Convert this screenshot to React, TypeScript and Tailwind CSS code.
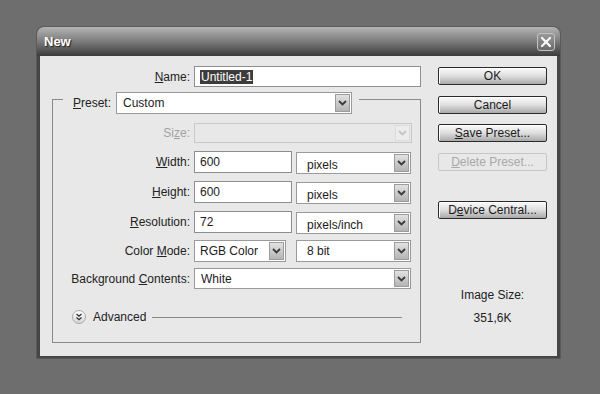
import React from "react";

function U({ children }: { children: React.ReactNode }) {
    return <span className="underline underline-offset-[1px]">{children}</span>;
}

function Chevron({ disabled = false }: { disabled?: boolean }) {
    return (
        <svg width="9" height="6" viewBox="0 0 9 6">
            <path
                d="M1 1l3.5 3.5L8 1"
                stroke={disabled ? "#c4c4c4" : "#3a3a3a"}
                strokeWidth="1.8"
                fill="none"
            />
        </svg>
    );
}

interface SelectProps {
    value?: string;
    width: string;
    height?: string;
    disabled?: boolean;
    textPad?: string;
}

function Select({ value = "", width, height = "h-[22px]", disabled = false, textPad = "pl-[9px]" }: SelectProps) {
    return (
        <div
            className={`${width} ${height} flex items-stretch border border-[#9a9a9a] p-[1px] ${
                disabled ? "bg-[#e8e8e8] border-[#c8c8c8]" : "bg-white"
            }`}
        >
            <div className={`flex-1 flex items-center ${textPad} text-[12px] text-[#1c1c1c]`}>{value}</div>
            <div
                className={`w-[15px] flex items-center justify-center border ${
                    disabled
                        ? "border-[#dcdcdc] bg-[#ececec]"
                        : "border-[#9c9c9c] bg-gradient-to-b from-[#e2e2e2] to-[#b4b4b4]"
                }`}
            >
                <Chevron disabled={disabled} />
            </div>
        </div>
    );
}

function TextInput({ value, width }: { value: string; width: string }) {
    return (
        <div
            className={`${width} h-[22px] flex items-center border border-[#8e8e8e] bg-white pl-[5px] text-[12px] text-[#1c1c1c]`}
        >
            {value}
        </div>
    );
}

function Label({ children, width, muted = false }: { children: React.ReactNode; width: string; muted?: boolean }) {
    return (
        <div className={`${width} text-right text-[12px] ${muted ? "text-[#a2a2a2]" : "text-[#222]"}`}>
            {children}
        </div>
    );
}

function Button({ children, disabled = false, className = "" }: { children: React.ReactNode; disabled?: boolean; className?: string }) {
    return (
        <div
            className={`w-[109px] h-[18px] flex items-center justify-center rounded-[2px] text-[12px] ${
                disabled
                    ? "border border-[#c6c6c6] text-[#a8a8a8]"
                    : "border border-[#2a2a2a] bg-gradient-to-b from-[#fbfbfb] via-[#dedede] to-[#a9a9a9] text-[#1c1c1c] shadow-[inset_1px_1px_0_#ffffff]"
            } ${className}`}
        >
            {children}
        </div>
    );
}

export default function App() {
    return (
        <div
            className="w-[600px] h-[394px] bg-[#6e6e6e] pl-[37px] pt-[27px]"
            style={{ fontFamily: "Tahoma, 'Liberation Sans', Arial, sans-serif" }}
        >
            <div className="w-[523px] h-[331px] flex flex-col rounded-t-[7px] bg-[#464646] shadow-[0_0_0_1px_#5a5a5a]">
                {/* Title bar */}
                <div className="h-[29px] flex items-center justify-between rounded-t-[7px] bg-gradient-to-b from-[#b4b4b4] via-[#7c7c7c] to-[#3c3c3c] pl-[7px] pr-[5px]">
                    <span className="text-[13px] font-bold text-white [text-shadow:1px_1px_1px_#222]">New</span>
                    <div className="w-[18px] h-[18px] flex items-center justify-center rounded-[3px] border border-[#c2c2c2] bg-gradient-to-b from-[#9a9a9a] to-[#6a6a6a]">
                        <svg width="12" height="12" viewBox="0 0 12 12">
                            <path d="M2 2l8 8M10 2l-8 8" stroke="#fff" strokeWidth="2.2" strokeLinecap="round" />
                        </svg>
                    </div>
                </div>

                {/* Body */}
                <div className="flex-1 mx-[3px] mb-[2px] flex bg-[#e8e8e8]">
                    {/* Form */}
                    <div className="w-[390px] flex flex-col pt-[10px]">
                        <div className="flex items-center">
                            <Label width="w-[150px]">
                                <U>N</U>ame:
                            </Label>
                            <div className="ml-[4px] w-[227px] h-[21px] flex items-center border border-[#8e8e8e] bg-white pl-[5px]">
                                <span className="bg-[#3c3c3c] px-[1px] text-[12px] leading-[14px] text-white">Untitled-1</span>
                            </div>
                        </div>

                        {/* Preset group */}
                        <div className="ml-[12px] mt-[12px] w-[369px] h-[244px] flex flex-col border border-[#8a8a8a]">
                            <div className="-mt-[8px] ml-[10px] flex items-center self-start bg-[#e8e8e8] pl-[10px] pr-[7px]">
                                <span className="text-[12px] text-[#222]">
                                    <U>P</U>reset:
                                </span>
                                <div className="ml-[5px]">
                                    <Select value="Custom" width="w-[236px]" textPad="pl-[5px]" />
                                </div>
                            </div>

                            <div className="mt-[9px] flex items-center">
                                <Label width="w-[137px]" muted>
                                    Si<U>z</U>e:
                                </Label>
                                <div className="ml-[4px]">
                                    <Select width="w-[218px]" height="h-[20px]" disabled />
                                </div>
                            </div>

                            <div className="mt-[7px] flex items-center">
                                <Label width="w-[137px]">
                                    <U>W</U>idth:
                                </Label>
                                <div className="ml-[4px]">
                                    <TextInput value="600" width="w-[98px]" />
                                </div>
                                <div className="ml-[4px] mt-[2px]">
                                    <Select value="pixels" width="w-[115px]" textPad="pl-[9px] pt-[3px]" />
                                </div>
                            </div>

                            <div className="mt-[6px] flex items-center">
                                <Label width="w-[137px]">
                                    <U>H</U>eight:
                                </Label>
                                <div className="ml-[4px]">
                                    <TextInput value="600" width="w-[98px]" />
                                </div>
                                <div className="ml-[4px] mt-[2px]">
                                    <Select value="pixels" width="w-[115px]" textPad="pl-[9px] pt-[3px]" />
                                </div>
                            </div>

                            <div className="mt-[6px] flex items-center">
                                <Label width="w-[137px]">
                                    <U>R</U>esolution:
                                </Label>
                                <div className="ml-[4px]">
                                    <TextInput value="72" width="w-[98px]" />
                                </div>
                                <div className="ml-[4px] mt-[2px]">
                                    <Select value="pixels/inch" width="w-[115px]" textPad="pl-[9px] pt-[3px]" />
                                </div>
                            </div>

                            <div className="mt-[6px] flex items-center">
                                <Label width="w-[137px]">
                                    Color <U>M</U>ode:
                                </Label>
                                <div className="ml-[4px]">
                                    <Select value="RGB Color" width="w-[92px]" textPad="pl-[4px]" />
                                </div>
                                <div className="ml-[10px]">
                                    <Select value="8 bit" width="w-[115px]" />
                                </div>
                            </div>

                            <div className="mt-[6px] flex items-center">
                                <Label width="w-[137px]">
                                    Background <U>C</U>ontents:
                                </Label>
                                <div className="ml-[4px]">
                                    <Select value="White" width="w-[217px]" height="h-[21px]" textPad="pl-[5px]" />
                                </div>
                            </div>

                            {/* Advanced */}
                            <div className="mt-[19px] ml-[19px] flex items-center">
                                <div className="w-[14px] h-[14px] flex items-center justify-center rounded-full border border-[#a8a8a8] bg-gradient-to-b from-white to-[#d6d6d6]">
                                    <svg width="8" height="8" viewBox="0 0 8 8">
                                        <path d="M1.5 1l2.5 2.2L6.5 1M1.5 4.5l2.5 2.2 2.5-2.2" stroke="#333" strokeWidth="1.3" fill="none" />
                                    </svg>
                                </div>
                                <span className="ml-[7px] text-[12px] text-[#222]">Advanced</span>
                                <div className="ml-[6px] mr-[18px] flex-1 h-px bg-[#8a8a8a]" />
                            </div>
                        </div>
                    </div>

                    {/* Buttons */}
                    <div className="flex-1 flex flex-col pl-[8px] pt-[11px]">
                        <Button>OK</Button>
                        <Button className="mt-[11px]">Cancel</Button>
                        <Button className="mt-[10px]">
                            <U>S</U>ave Preset...
                        </Button>
                        <Button disabled className="mt-[11px] h-[17px]">
                            <U>D</U>elete Preset...
                        </Button>
                        <Button className="mt-[30px]">
                            D<U>e</U>vice Central...
                        </Button>
                        <div className="w-[109px] mt-[69px] text-center text-[12px] leading-[14px] text-[#222]">Image Size:</div>
                        <div className="w-[109px] mt-[9px] text-center text-[12px] leading-[14px] text-[#222]">351,6K</div>
                    </div>
                </div>
            </div>
        </div>
    );
}
